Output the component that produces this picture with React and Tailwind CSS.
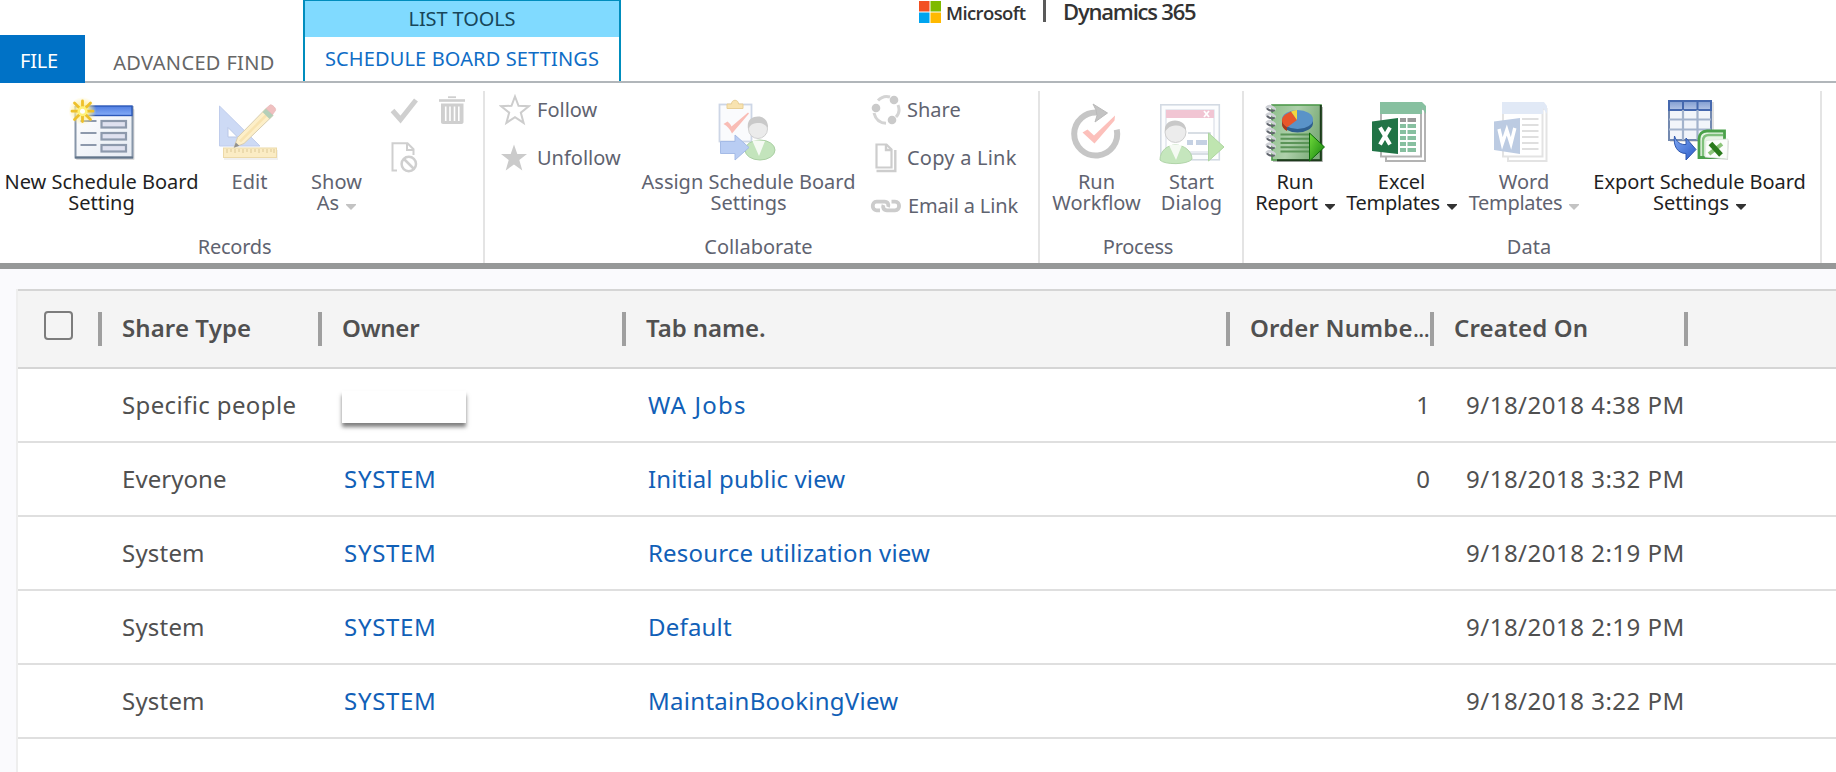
import React from "react";

/* ---------- Large ribbon icons (64 x 64) ---------- */

function Big({ children }) {
  return (
    <svg viewBox="0 0 64 64" className="h-16 w-16 shrink-0 overflow-visible" fill="none">
      {children}
    </svg>
  );
}

function NewRecordIcon() {
  return (
    <Big>
      <defs>
        <linearGradient id="nrBar" x1="0" y1="0" x2="0" y2="1">
          <stop offset="0" stopColor="#4f7de0" />
          <stop offset="1" stopColor="#86adf8" />
        </linearGradient>
        <linearGradient id="nrPage" x1="0" y1="0" x2="1" y2="1">
          <stop offset="0" stopColor="#ffffff" />
          <stop offset="1" stopColor="#e6ebf3" />
        </linearGradient>
        <radialGradient id="nrGlow">
          <stop offset="0" stopColor="#fff" />
          <stop offset="0.35" stopColor="#fff3a0" />
          <stop offset="1" stopColor="#ffe98a" stopOpacity="0" />
        </radialGradient>
      </defs>
      <rect x="6" y="13" width="58.5" height="51" rx="1" fill="#000" opacity="0.14" />
      <rect x="5.5" y="11" width="57" height="50.5" fill="url(#nrPage)" stroke="#8796a9" strokeWidth="2" />
      <path d="M5 61.5h58" stroke="#62758a" strokeWidth="2" />
      <rect x="14" y="10" width="48" height="9.5" fill="url(#nrBar)" stroke="#2c58b8" strokeWidth="1.4" />
      <path d="M10.5 25h16M10.5 37h16M10.5 49h16" stroke="#8d99ac" strokeWidth="2" />
      <g fill="#dfe1ef" stroke="#8d99ac" strokeWidth="2.2">
        <rect x="31.5" y="25" width="24.5" height="6.5" />
        <rect x="31.5" y="37" width="24.5" height="6.5" />
        <rect x="31.5" y="49" width="24.5" height="6.5" />
      </g>
      <circle cx="12.5" cy="15" r="14" fill="url(#nrGlow)" />
      <g stroke="#eec02a" strokeWidth="2.8" strokeLinecap="round">
        <path d="M12.500 5v6M12.500 19.500v6M2 15.200h6M17 15.200h6M4.500 7l4.500 4.500M20.500 7L16 11.500M4.500 23.500L9 19M20.500 23.500L16 19" />
      </g>
      <circle cx="12.5" cy="15.2" r="5" fill="#fff27a" />
      <circle cx="12.5" cy="15.2" r="2.5" fill="#fff" />
    </Big>
  );
}

function EditIcon() {
  return (
    <Big>
      <path d="M1.500 10v40H42z" fill="#cddaf5" stroke="#c0cdec" strokeWidth="1" />
      <path d="M10 31.500V41h9.500z" fill="#fff" stroke="#b9c7e6" strokeWidth="1" />
      <rect x="6" y="54" width="54" height="10" fill="#000" opacity="0.06" />
      <rect x="5.5" y="52" width="53" height="9.5" fill="#fbecc4" stroke="#ecd9a8" strokeWidth="1" />
      <path d="M9 53v4M13 53v3M17 53v4M21 53v3M25 53v4M29 53v3M33 53v4M37 53v3M41 53v4M45 53v3M49 53v4M53 53v3M56 53v4" stroke="#dcc896" strokeWidth="1" />
      <path d="M16 51.500l3.500-10L48 12.500l7 7-29 28z" fill="#fdefc8" stroke="#d8cdb0" strokeWidth="1" />
      <path d="M16 51.500l1.800-5 3.500 3.200z" fill="#8f8f8f" />
      <path d="M22 45.500l27-27" stroke="#f8e3b0" strokeWidth="2.5" />
      <path d="M44.500 16l4-4 7 7-4 4z" fill="#b4cfb8" />
      <path d="M48 12.500l4-3.500c2-1 6.500 3.500 5.500 5.500l-3 4z" fill="#f0c0c0" stroke="#e6b9b9" strokeWidth="0.8" />
    </Big>
  );
}

function AssignIcon() {
  return (
    <Big>
      <rect x="2.5" y="8.5" width="32" height="37" fill="#fafbfd" stroke="#cdd6e6" strokeWidth="1.8" />
      <path d="M10 12.500V8h4.500c0-5 7-5 7 0H26v4.500z" fill="#f8e3b0" stroke="#e8cf96" strokeWidth="1" />
      <path d="M6.500 28l4-2.500c2 1.500 3 3 4 5L31 16.500l1 1L15 37.500c-2-4-4.500-7.500-8.500-9.500z" fill="#f9bdb6" />
      <ellipse cx="43" cy="54" rx="15" ry="10" fill="#c3e4bc" stroke="#a9cfa2" strokeWidth="1" />
      <path d="M35 44l7 16 6-15z" fill="#f5faf3" />
      <circle cx="41" cy="33" r="9.5" fill="#ebebeb" stroke="#d0d0d0" />
      <path d="M31 33c-1.500-9 4-12.500 10-12.500S51.500 25 51 32c-3-4-7-5.500-11-5-4 .3-7 2-9 6z" fill="#c9c9c9" />
      <path d="M3.500 45.500H18V39l14 12.500L18 64v-6.500H3.500z" fill="#b9cdf3" stroke="#a5bbe6" strokeWidth="1" />
    </Big>
  );
}

function WorkflowIcon() {
  return (
    <Big>
      <path d="M51.500 32.500A21.500 21.500 0 1 1 32 16.500" stroke="#c6c6c6" strokeWidth="6" transform="rotate(3 30 38)" />
      <path d="M28 8l14.500 9L30 26l2-6.500-1-5.500z" fill="#c3c3c3" stroke="#bababa" strokeWidth="1" />
      <path d="M17.500 36.500l5-3 6.500 6L50 19.500l-.5 5L29.500 47.500z" fill="#fcc0bb" />
    </Big>
  );
}

function DialogIcon() {
  return (
    <Big>
      <rect x="0.8" y="8.8" width="58.5" height="55" fill="#fcfdfe" stroke="#d3dae3" strokeWidth="1.6" />
      <rect x="6" y="14" width="48" height="42" fill="#fff" stroke="#dbe0e8" strokeWidth="1.2" />
      <rect x="6" y="14" width="48" height="8" fill="#f1c5d3" />
      <path d="M44 15l5 6M49 15l-5 6" stroke="#fff" strokeWidth="1.8" />
      <path d="M28 37h22v21H28" stroke="#ccd3dc" strokeWidth="1.5" />
      <path d="M27 44h6v5h-6zM36 44h11v5H36z" fill="#c5d1e3" />
      <path d="M0 64c0-9 7-15 15.500-15S32 55 32 63c-4 6-28 6-32 1z" fill="#c5e6bd" stroke="#b1d4a9" strokeWidth="1" />
      <path d="M9 49l7 15 6-15z" fill="#f5faf3" />
      <circle cx="15.5" cy="36" r="10.5" fill="#ececec" stroke="#cfcfcf" />
      <path d="M5 35.500C4 28 9 24.500 15 24.500S26 28 26 34c-4-4-7-5-11-4.500-4 .3-7 2-10 6z" fill="#c8c8c8" />
      <path d="M48.500 37L64 51 48.500 65z" fill="#bfe5b0" stroke="#aed6a0" strokeWidth="1" />
    </Big>
  );
}

function ReportIcon() {
  return (
    <Big>
      <defs>
        <linearGradient id="rpCover" x1="0" y1="0" x2="1" y2="0.3">
          <stop offset="0" stopColor="#8fbf8c" />
          <stop offset="0.5" stopColor="#aed0ab" />
          <stop offset="1" stopColor="#7fae7c" />
        </linearGradient>
        <linearGradient id="rpPlay" x1="0" y1="0" x2="1" y2="1">
          <stop offset="0" stopColor="#72dc3c" />
          <stop offset="1" stopColor="#12800c" />
        </linearGradient>
      </defs>
      <rect x="10" y="11" width="50" height="55" fill="#000" opacity="0.25" />
      <rect x="9" y="9" width="49" height="55" fill="url(#rpCover)" stroke="#4f9a4d" strokeWidth="1.6" />
      <path d="M57.800 9v55.200H14" stroke="#1d3a1c" strokeWidth="2" />
      <ellipse cx="34.5" cy="27" rx="15.5" ry="9.5" fill="#2f5f8e" />
      <ellipse cx="34.5" cy="23.5" rx="15.5" ry="9.5" fill="#5a93c8" />
      <path d="M34 24L24 31.500c-6-3.500-7-9-1.500-13L28 15.500z" fill="#e8562a" />
      <path d="M19 24c0 3 2 6 5 7.500v3.500c-3-1.500-5-4-5-7z" fill="#a93818" />
      <path d="M34 24l-6-8.500c2-1 4-1.500 6-1.500z" fill="#f4d63e" />
      <path d="M17.500 38.500h29M17.500 42.800h29M17.500 47h29M17.500 51.300h29M17.500 55.500h29" stroke="#5a9457" strokeWidth="2" />
      {[12, 19.5, 27, 34.5, 42, 49.5, 57].map((y) => (
        <g key={y}>
          <path d={`M4 ${y - 0.5}c2-2.500 5-1 7.500 1.500`} stroke="#cfd1d6" strokeWidth="3" strokeLinecap="round" />
          <path d={`M4.500 ${y + 1}c2 2 4 2 6.500 1.500`} stroke="#62666e" strokeWidth="2" strokeLinecap="round" />
        </g>
      ))}
      <path d="M46.500 37L61.500 51 46.500 65z" fill="url(#rpPlay)" stroke="#0e6a0a" strokeWidth="1" />
    </Big>
  );
}

function ExcelIcon() {
  return (
    <Big>
      <path d="M16 13h39v52H16z" fill="#fff" stroke="#b3b3b3" strokeWidth="2" />
      <path d="M11 7h40v53.500H11z" fill="#fff" stroke="#b3b3b3" strokeWidth="2" />
      <path d="M10 6h42l4 4v8l-4-6v6H10z" fill="#87c0a0" />
      <path d="M2 25.500L28 22v36L2 55z" fill="#217346" />
      <path d="M10 31.500l10 17M20 31.500l-10 17" stroke="#fff" strokeWidth="4" />
      <path d="M30 22h6v4h-6zM37.500 22h8.500v4h-8.500z" fill="#999" />
      <path d="M30 28h6v4h-6zM37.500 28h8.500v4h-8.500zM30 34h6v4h-6zM37.500 34h8.500v4h-8.500zM30 40h6v4h-6zM37.500 40h8.500v4h-8.500zM30 46h6v4h-6zM37.500 46h8.500v4h-8.500zM30 52h6v4h-6zM37.500 52h8.500v4h-8.500z" fill="#87c0a0" />
    </Big>
  );
}

function WordIcon() {
  return (
    <Big>
      <path d="M16 13h38.500v52H16z" fill="#fff" stroke="#e3e3e3" strokeWidth="2" />
      <path d="M11 7h39.500v53.500H11z" fill="#fff" stroke="#e3e3e3" strokeWidth="2" />
      <path d="M10 6h42l3 4v8l-4-6v6H10z" fill="#e1e9f6" />
      <path d="M2 25.500L28 22v36L2 54z" fill="#bccbe2" />
      <path d="M7 33l3.300 14.500L14.800 34l4.200 13.500L22.800 32" stroke="#fff" strokeWidth="3.4" />
      <path d="M30 23h16.500M30 29h16.500M30 35h16.500M30 41h16.500M30 47h16.500M30 53h16.500" stroke="#dfdfdf" strokeWidth="2" />
    </Big>
  );
}

function ExportIcon() {
  return (
    <Big>
      <defs>
        <linearGradient id="exHead" x1="0" y1="0" x2="0" y2="1">
          <stop offset="0" stopColor="#7f9bd0" />
          <stop offset="1" stopColor="#b4c5e6" />
        </linearGradient>
        <linearGradient id="exArrow" x1="0" y1="0" x2="1" y2="1">
          <stop offset="0" stopColor="#7fa7f2" />
          <stop offset="1" stopColor="#2b5cc8" />
        </linearGradient>
      </defs>
      <rect x="2" y="6" width="44" height="40" fill="#000" opacity="0.12" />
      <rect x="1" y="5" width="42" height="39" fill="#f2f5fa" stroke="#7389b0" strokeWidth="2" />
      <rect x="1" y="5" width="42" height="9" fill="url(#exHead)" stroke="#4568ae" strokeWidth="2" />
      <path d="M15 14v30M29.500 14v30M1 23.500h42M1 33.500h42" stroke="#a3b3cc" strokeWidth="2.2" />
      <path d="M15 5v9M29.500 5v9" stroke="#4568ae" strokeWidth="2" />
      <path d="M6.500 40c2 6 6 9 11.500 8.500V42l10 11.500L18 64v-6.500C9.500 57.500 5 50 6.500 40z" fill="url(#exArrow)" stroke="#2f57ad" strokeWidth="1" />
      <path d="M31 61.500V43c0-5 3-8 8-8h17.500v26.500z" fill="#e6f4e4" stroke="#4aa14a" strokeWidth="2.8" />
      <path d="M35 60V45c0-4 2-6 6-6h14" stroke="#7fc07c" strokeWidth="2.4" />
      <path d="M39 46l22-1.500-1 19.500-23-2z" fill="#000" opacity="0.15" />
      <path d="M38 44.500l22-1.500-1 20-22-2z" fill="#fbfdfb" stroke="#dfe6df" strokeWidth="0.8" />
      <path d="M41 58l13-10" stroke="#8cc47a" strokeWidth="4" />
      <path d="M42.500 47.500L53 59" stroke="#2a7a1c" strokeWidth="5" />
    </Big>
  );
}

/* ---------- Small ribbon icons ---------- */

function Small({ children, className = "" }) {
  return (
    <svg viewBox="0 0 32 32" className={`h-8 w-8 shrink-0 ${className}`} fill="none">
      {children}
    </svg>
  );
}

function CheckIcon() {
  return (
    <Small>
      <path d="M4.500 16.500l8 9L28 6" stroke="#cfcfcf" strokeWidth="5" />
    </Small>
  );
}

function TrashIcon() {
  return (
    <Small>
      <path d="M12 3.200h8" stroke="#cfcfcf" strokeWidth="1.8" />
      <path d="M3 6.500h26" stroke="#cfcfcf" strokeWidth="2.6" />
      <path d="M5 9.500h22.500V28c0 1-.8 2-2 2H7c-1.200 0-2-1-2-2z" fill="#cfcfcf" />
      <path d="M9.700 12.500v14.500M14 12.500v14.500M18.500 12.500v14.500M22.800 12.500v14.500" stroke="#fff" strokeWidth="1.6" />
    </Small>
  );
}

function DeactivateIcon() {
  return (
    <Small>
      <path d="M9 28.500H4.500V1.200h15l6 6V13M19 1.500V8h6.500" stroke="#cfcfcf" strokeWidth="2" />
      <circle cx="20.8" cy="22" r="7.2" stroke="#cfcfcf" strokeWidth="2.5" />
      <path d="M16 17l10 10" stroke="#cfcfcf" strokeWidth="2.5" />
    </Small>
  );
}

function StarOutlineIcon() {
  return (
    <Small>
      <path d="M16 2.500l3.500 9.300 10.300.4-8 6.400 2.800 10.300-8.600-5.800-8.600 5.800 2.800-10.300-8-6.400 10.300-.4z" stroke="#cdcdcd" strokeWidth="2" />
    </Small>
  );
}

function StarIcon() {
  return (
    <Small className="-translate-x-px">
      <path d="M16 2.500l3.300 9.500H29l-7.700 6 3 10.500-8.300-6-8.300 6 3-10.500L3 12h9.700z" fill="#cbcbcb" />
    </Small>
  );
}

function ShareIcon() {
  return (
    <Small>
      <path d="M8 6.500C12 2.300 17 2 20 3M28 11c2 5 .5 9.500-2 12M16 29.300C10 29 5.500 25 4 19" stroke="#d4d4d4" strokeWidth="3" />
      <circle cx="24" cy="6" r="4.3" fill="#cacaca" />
      <circle cx="6" cy="14" r="4.3" fill="#cacaca" />
      <circle cx="22" cy="26" r="4.3" fill="#cacaca" />
    </Small>
  );
}

function CopyIcon() {
  return (
    <Small>
      <path d="M6.500 2.500h10l5 5v18h-15z" stroke="#cdcdcd" strokeWidth="2.2" />
      <path d="M16 2.500V8h5.500" stroke="#cdcdcd" strokeWidth="2.4" />
      <path d="M25.300 8v21H6.500" stroke="#cdcdcd" strokeWidth="2.4" />
    </Small>
  );
}

function LinkIcon() {
  return (
    <Small>
      <path d="M10 20.300H6.500c-5 0-5-8.600 0-8.600h8c3.500 0 4.500 3 3.500 5.300" stroke="#cccccc" strokeWidth="3.8" />
      <path d="M21.500 11.700H25c5.500 0 5.500 8.600 0 8.600h-8c-3.500 0-4.500-3-3.500-5.300" stroke="#cccccc" strokeWidth="3.8" />
    </Small>
  );
}

/* ---------- Ribbon building blocks ---------- */

function Caret({ muted }) {
  return (
    <svg viewBox="0 0 10 6" className={`ml-[7px] inline-block h-[6px] w-[10px] align-baseline ${muted ? "text-[#c3c3c3]" : "text-[#333333]"}`}>
      <path d="M0 0h10v1L5 6 0 1z" fill="currentColor" />
    </svg>
  );
}

function BigButton({ icon, line1, line2, width, t1 = "", t2 = "", muted, caret }) {
  return (
    <button
      type="button"
      className={`flex shrink-0 flex-col items-center pt-[13px] whitespace-nowrap ${width} ${muted ? "text-[#5f6370]" : "text-[#1f1f24]"}`}
    >
      {icon || <span className="h-16 w-16" />}
      <span className="mt-[11px] text-center leading-[21px]">
        <span className={t1}>{line1}</span>
        {line2 && (
          <>
            <br />
            <span className={t2}>{line2}</span>
            {caret && <Caret muted={muted} />}
          </>
        )}
      </span>
    </button>
  );
}

function RowButton({ icon, label, box, tracking = "" }) {
  return (
    <button type="button" className="flex h-12 items-center whitespace-nowrap text-[#5f6370]">
      <span className={`flex justify-center ${box}`}>{icon}</span>
      <span className={tracking}>{label}</span>
    </button>
  );
}

function Group({ width, label, tracking = "", labelPad, children }) {
  return (
    <section className={`flex h-[180px] shrink-0 ${width}`}>
      <div className="flex min-w-0 grow flex-col">
        <div className="flex h-[150px]">{children}</div>
        <div className={`text-center leading-[28px] text-[#5f6370] ${labelPad} ${tracking}`}>{label}</div>
      </div>
      <div className="mt-2 w-0.5 shrink-0 bg-[#e4e4e4]" />
    </section>
  );
}

function Tabs() {
  return (
    <header className="flex h-[83px] border-b-2 border-[#b1b6ba]">
      <div className="mt-[35px] flex h-12 w-[85px] items-center bg-[#0072c6] pt-[3px] pl-5 tracking-[-0.2px] text-white">FILE</div>
      <div className="mt-[35px] flex h-[46px] w-[218px] items-center justify-center pt-[9px] tracking-[0.36px] text-[#666666]">
        ADVANCED FIND
      </div>
      <div className="flex h-[81px] w-[318px] flex-col border-x-2 border-t border-[#008dbd]">
        <div className="flex h-9 items-center justify-center bg-[#80daff] pb-px tracking-[-0.1px] text-[#17465a]">LIST TOOLS</div>
        <div className="flex grow items-center justify-center pb-px tracking-[0.13px] text-[#0f6dc6]">SCHEDULE BOARD SETTINGS</div>
      </div>
      <div className="flex h-7 items-start pl-[298px] font-['Open_Sans',sans-serif] whitespace-nowrap text-[#333333]">
        <svg viewBox="0 0 22 22" className="mt-px h-[22px] w-[22px] shrink-0">
          <path d="M0 0h10.500v10.500H0z" fill="#f25022" />
          <path d="M11.500 0H22v10.500H11.500z" fill="#7fba00" />
          <path d="M0 11.500h10.500V22H0z" fill="#00a4ef" />
          <path d="M11.500 11.500H22V22H11.500z" fill="#ffb900" />
        </svg>
        <span className="ml-[5px] w-[97px] text-[18.5px] leading-[25px] font-semibold tracking-[-0.6px]">Microsoft</span>
        <span className="h-[22px] w-[3px] bg-[#5a5a5a]" />
        <span className="ml-[17px] text-[22px] leading-[22px] font-semibold tracking-[-1.2px]">Dynamics 365</span>
      </div>
    </header>
  );
}

function Ribbon() {
  return (
    <div className="flex h-[186px] border-b-[6px] border-[#969898] bg-white">
      <Group width="w-[485px]" label="Records" tracking="tracking-[-0.22px]" labelPad="pr-[14px]">
        <BigButton width="w-[203px]" icon={<NewRecordIcon />} line1="New Schedule Board" line2="Setting" />
        <BigButton width="w-[93px]" icon={<EditIcon />} line1="Edit" muted />
        <BigButton width="w-[81px]" line1="Show" line2="As" muted caret />
        <div className="ml-[3px] grid h-24 grid-cols-[48px_48px] grid-rows-[48px_48px] place-items-center pt-[3px]">
          <CheckIcon />
          <TrashIcon />
          <DeactivateIcon />
        </div>
      </Group>

      <Group width="w-[555px]" label="Collaborate" labelPad="pr-[6px]">
        <div className="w-[147px] pt-[3px] pl-[11px]">
          <RowButton box="mr-[3px] w-[38px]" icon={<StarOutlineIcon />} label="Follow" />
          <RowButton box="mr-[3px] w-[38px]" icon={<StarIcon />} label="Unfollow" />
        </div>
        <BigButton width="w-[233px]" icon={<AssignIcon />} line1="Assign Schedule Board" line2="Settings" muted />
        <div className="pt-[3px]">
          <RowButton box="w-[42px]" icon={<ShareIcon />} label="Share" />
          <RowButton box="w-[42px]" icon={<CopyIcon />} label="Copy a Link" tracking="tracking-[0.22px]" />
          <RowButton box="mr-px w-[42px]" icon={<LinkIcon />} label="Email a Link" tracking="tracking-[-0.14px]" />
        </div>
      </Group>

      <Group width="w-[204px]" label="Process" tracking="tracking-[-0.25px]" labelPad="pr-[6px]">
        <BigButton width="w-[113px]" icon={<WorkflowIcon />} line1="Run" line2="Workflow" t2="tracking-[-0.05px]" muted />
        <BigButton width="w-[77px]" icon={<DialogIcon />} line1="Start" line2="Dialog" t2="tracking-[0.15px]" muted />
      </Group>

      <Group width="w-[578px]" label="Data" labelPad="pr-[6px]">
        <BigButton width="w-[102px]" icon={<ReportIcon />} line1="Run" line2="Report" t2="tracking-[-0.2px]" caret />
        <BigButton width="w-[111px]" icon={<ExcelIcon />} line1="Excel" line2="Templates" t2="tracking-[-0.32px]" caret />
        <BigButton width="w-[134px]" icon={<WordIcon />} line1="Word" line2="Templates" t2="tracking-[-0.32px]" muted caret />
        <BigButton width="w-[217px]" icon={<ExportIcon />} line1="Export Schedule Board" line2="Settings" t1="tracking-[-0.07px]" caret />
      </Group>
    </div>
  );
}

/* ---------- Records grid ---------- */

const COLS = "grid grid-cols-[80px_220px_304px_604px_204px_254px_1fr]";

const rows = [
  { share: "Specific people", shareT: "tracking-[0.38px]", owner: null, tab: "WA Jobs", tabT: "tracking-[1.2px]", order: "1", created: "9/18/2018 4:38 PM" },
  { share: "Everyone", shareT: "tracking-[0.06px]", owner: "SYSTEM", tab: "Initial public view", tabT: "tracking-[0.14px]", order: "0", created: "9/18/2018 3:32 PM" },
  { share: "System", shareT: "tracking-[0.2px]", owner: "SYSTEM", tab: "Resource utilization view", tabT: "tracking-[0.18px]", order: "", created: "9/18/2018 2:19 PM" },
  { share: "System", shareT: "tracking-[0.2px]", owner: "SYSTEM", tab: "Default", tabT: "tracking-[0.2px]", order: "", created: "9/18/2018 2:19 PM" },
  { share: "System", shareT: "tracking-[0.2px]", owner: "SYSTEM", tab: "MaintainBookingView", tabT: "tracking-[0.28px]", order: "", created: "9/18/2018 3:22 PM" },
];

function HeaderCell({ label, tracking = "" }) {
  return (
    <div className="flex items-center">
      <span className="h-[34px] w-1 shrink-0 bg-[#9f9f9f]" />
      <span className={`-mt-px pl-5 whitespace-nowrap ${tracking}`}>{label}</span>
    </div>
  );
}

function RecordsGrid() {
  return (
    <main className="flex grow bg-[#fafafd] pt-5 pl-4">
      <div className="flex grow flex-col border-l-2 border-[#eeeeee] bg-white text-[24px] text-[#505050]">
        <div className={`${COLS} h-20 shrink-0 border-y-2 border-[#d5d5d5] bg-[#f4f4f4] pb-px font-semibold`}>
          <div className="flex items-center pl-[26px]">
            <span className="-mt-[6px] h-[29px] w-[29px] rounded-[4px] border-2 border-[#7c7c7c]" />
          </div>
          <HeaderCell label="Share Type" tracking="tracking-[0.1px]" />
          <HeaderCell label="Owner" tracking="tracking-[-0.25px]" />
          <HeaderCell label="Tab name." tracking="tracking-[-0.06px]" />
          <HeaderCell
            label={
              <>
                Order Numbe<span className="font-normal tracking-[-1px]">...</span>
              </>
            }
            tracking="tracking-[0.15px]"
          />
          <HeaderCell label="Created On" tracking="tracking-[0.17px]" />
          <HeaderCell label="" />
        </div>
        {rows.map((r, i) => (
          <div key={i} className={`${COLS} h-[74px] shrink-0 items-center border-b-2 border-[#dfdfdf] whitespace-nowrap`}>
            <span />
            <span className={`pl-6 ${r.shareT}`}>{r.share}</span>
            {r.owner ? (
              <a className="pl-[26px] tracking-[0.7px] text-[#1160b7]">{r.owner}</a>
            ) : (
              <span className="ml-6 h-8 w-[124px] translate-y-[2px] bg-white shadow-[0_4px_4px_rgba(0,0,0,0.5)]" />
            )}
            <a className={`pl-[26px] text-[#1160b7] ${r.tabT}`}>{r.tab}</a>
            <span className="text-right">{r.order}</span>
            <span className="pl-[36px] tracking-[0.5px]">{r.created}</span>
            <span />
          </div>
        ))}
      </div>
    </main>
  );
}

export default function App() {
  return (
    <div className="flex h-[772px] w-[1836px] flex-col overflow-hidden bg-white font-['Noto_Sans','Open_Sans',sans-serif] text-[20px]">
      <Tabs />
      <Ribbon />
      <RecordsGrid />
    </div>
  );
}
